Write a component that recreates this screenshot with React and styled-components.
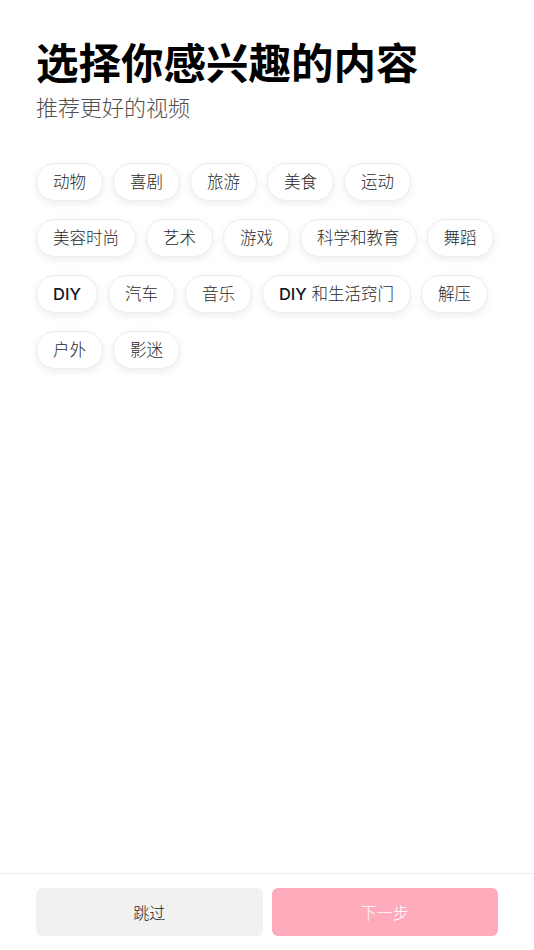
import React from 'react';
import styled, { createGlobalStyle } from 'styled-components';

const GlobalStyle = createGlobalStyle`
  html, body {
    margin: 0;
    padding: 0;
    background: #fff;
  }
  body {
    font-family: "Noto Sans CJK SC", "Noto Sans", sans-serif;
    color: #161823;
  }
`;

const Page = styled.div`
  min-height: 100vh;
  display: flex;
  flex-direction: column;
  box-sizing: border-box;
`;

const Content = styled.main`
  flex: 1;
  padding: 31px 36px 0;
`;

const Title = styled.h1`
  margin: 0;
  font-size: 42.5px;
  line-height: 60px;
  font-weight: 700;
  color: #000;
`;

const Subtitle = styled.p`
  margin: 0;
  font-size: 22px;
  line-height: 30px;
  font-weight: 300;
  color: #505050;
`;

const Tags = styled.div`
  margin-top: 42px;
  display: flex;
  flex-wrap: wrap;
  column-gap: 10px;
  row-gap: 18px;
  width: 470px;
`;

const Tag = styled.button`
  box-sizing: border-box;
  height: 38px;
  padding: 0 16px;
  border: 1px solid #ededed;
  border-radius: 19px;
  background: #fff;
  box-shadow: 0 3px 8px rgba(0, 0, 0, 0.07);
  font-family: "Inter", "Noto Sans CJK SC", sans-serif;
  font-size: 16.5px;
  line-height: 22px;
  font-weight: 300;
  color: #2a2a2a;
  cursor: pointer;
`;

const Latin = styled.span`
  font-weight: 500;
  color: #161823;
`;

const Footer = styled.footer`
  border-top: 1px solid #ececec;
  padding: 14px 36px;
  display: grid;
  grid-template-columns: 1fr 1fr;
  gap: 9px;
`;

const Action = styled.button`
  height: 48px;
  border: none;
  border-radius: 6px;
  font-family: inherit;
  font-size: 16px;
  font-weight: 300;
  background: ${p => (p.$primary ? '#feacbb' : '#f1f1f2')};
  color: ${p => (p.$primary ? '#fff' : '#161823')};
`;

const topics = [
  '动物', '喜剧', '旅游', '美食', '运动',
  '美容时尚', '艺术', '游戏', '科学和教育', '舞蹈',
  'DIY', '汽车', '音乐', 'DIY 和生活窍门', '解压',
  '户外', '影迷',
];

function TagLabel({ text }) {
  if (!text.startsWith('DIY')) return text;
  return (
    <>
      <Latin>DIY</Latin>
      {text.slice(3)}
    </>
  );
}

export default function App() {
  return (
    <Page>
      <GlobalStyle />
      <Content>
        <Title>选择你感兴趣的内容</Title>
        <Subtitle>推荐更好的视频</Subtitle>
        <Tags>
          {topics.map(t => (
            <Tag key={t}><TagLabel text={t} /></Tag>
          ))}
        </Tags>
      </Content>
      <Footer>
        <Action>跳过</Action>
        <Action $primary>下一步</Action>
      </Footer>
    </Page>
  );
}
